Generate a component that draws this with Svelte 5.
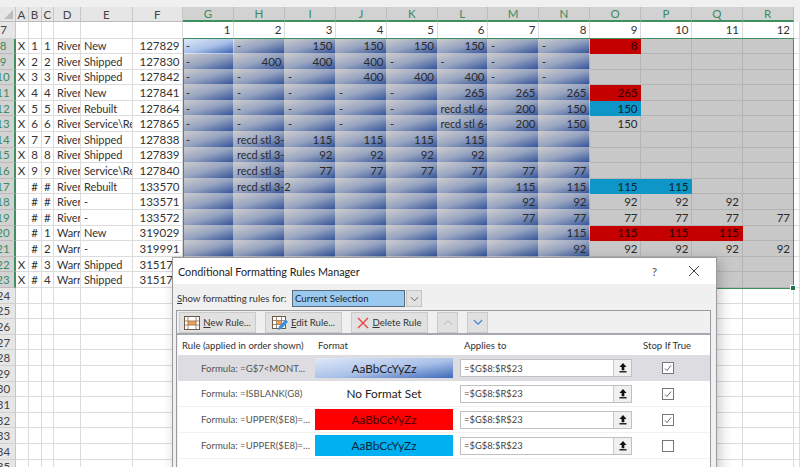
<script>
  const colWidths = [15.5, 13, 13, 12.5, 27, 51.5, 50.5, 51, 51, 51, 51, 50.5, 50.5, 51, 51, 51, 51, 50.5, 51, 6];
  const letters = 'ABCDEFGHIJKLMNOPQR'.split('');
  const gridCols = colWidths.map((w) => w + 'px').join(' ');

  const left = [
    ['X', '1', '1', 'River', 'New', '127829'],
    ['X', '2', '2', 'River', 'Shipped', '127830'],
    ['X', '3', '3', 'River', 'Shipped', '127842'],
    ['X', '4', '4', 'River', 'New', '127841'],
    ['X', '5', '5', 'River', 'Rebuilt', '127864'],
    ['X', '6', '6', 'River', 'Service\\Re', '127865'],
    ['X', '7', '7', 'River', 'Shipped', '127838'],
    ['X', '8', '8', 'River', 'Shipped', '127839'],
    ['X', '9', '9', 'River', 'Service\\Re', '127840'],
    ['', '#', '#', 'River', 'Rebuilt', '133570'],
    ['', '#', '#', 'River', '-', '133571'],
    ['', '#', '#', 'River', '-', '133572'],
    ['', '#', '1', 'Warr', 'New', '319029'],
    ['', '#', '2', 'Warr', '-', '319991'],
    ['X', '#', '3', 'Warr', 'Shipped', '315170'],
    ['X', '#', '4', 'Warr', 'Shipped', '315171']
  ];

  const S3 = 'recd stl 3-';
  const S6 = 'recd stl 6-';
  const months = [
    ['-', '-', '150', '150', '150', '150', '-', '-', '8', '', '', ''],
    ['-', '400', '400', '400', '-', '-', '-', '-', '', '', '', ''],
    ['-', '-', '-', '400', '400', '400', '-', '-', '', '', '', ''],
    ['-', '-', '-', '-', '-', '265', '265', '265', '265', '', '', ''],
    ['-', '-', '-', '-', '-', S6, '200', '150', '150', '', '', ''],
    ['-', '-', '-', '-', '-', S6, '200', '150', '150', '', '', ''],
    ['-', S3, '115', '115', '115', '115', '', '', '', '', '', ''],
    ['', S3, '92', '92', '92', '92', '', '', '', '', '', ''],
    ['', S3, '77', '77', '77', '77', '77', '77', '', '', '', ''],
    ['', 'recd stl 3-2', '', '', '', '', '115', '115', '115', '115', '', ''],
    ['', '', '', '', '', '', '92', '92', '92', '92', '92', ''],
    ['', '', '', '', '', '', '77', '77', '77', '77', '77', '77'],
    ['', '', '', '', '', '', '', '115', '115', '115', '115', ''],
    ['', '', '', '', '', '', '', '92', '92', '92', '92', '92'],
    ['', '', '', '', '', '', '', '', '', '', '', ''],
    ['', '', '', '', '', '', '', '', '', '', '', '']
  ];

  // rows counted from 8, columns from G
  const red = ['0:8', '3:8', '12:8', '12:9', '12:10'];
  const blue = ['4:8', '9:8', '9:9'];

  function fill(r, c) {
    const key = r + ':' + c;
    if (red.includes(key)) return 'red';
    if (blue.includes(key)) return 'blue';
    if (c > 7) return 'grey';
    return r === 0 && c === 0 ? 'grad first' : 'grad';
  }

  const blankRows = Array.from({ length: 12 }, (_, i) => 24 + i);
  const rules = [
    { text: 'Formula: =G$7<MONT...', fmt: 'grad', label: 'AaBbCcYyZz', checked: true, selected: true },
    { text: 'Formula: =ISBLANK(G8)', fmt: 'none', label: 'No Format Set', checked: true },
    { text: 'Formula: =UPPER($E8)=...', fmt: 'red', label: 'AaBbCcYyZz', checked: true },
    { text: 'Formula: =UPPER($E8)=...', fmt: 'blue', label: 'AaBbCcYyZz', checked: false }
  ];
</script>

<div class="page">
  <div class="sheet" style="grid-template-columns: {gridCols}">
    <div class="head corner"><span></span></div>
    {#each letters as l, i}
      <div class="head" class:on={i > 5}>{l}</div>
    {/each}
    <div class="head tail"></div>

    <div class="rh">7</div>
    {#each letters as l, i}
      <div class="c num">{i > 5 ? i - 5 : ''}</div>
    {/each}
    <div class="c"></div>

    {#each left as row, r}
      <div class="rh on">{r + 8}</div>
      {#each row as v, i}
        <div class="c" class:mid={i < 3} class:txt={i === 3 || i === 4} class:num={i === 5}>{v}</div>
      {/each}
      {#each months[r] as v, c}
        <div
          class="c m {fill(r, c)}"
          class:num={v !== '-' && !v.startsWith('recd')}
          class:txt={v === '-' || v.startsWith('recd')}
          class:spill={r === 9 && c === 1}
        >{v}</div>
      {/each}
      <div class="c"></div>
    {/each}

    {#each blankRows as n}
      <div class="rh">{n}</div>
      {#each colWidths.slice(1) as _}
        <div class="c"></div>
      {/each}
    {/each}

    <div class="selection"><i></i></div>
  </div>

  <div class="dialog">
    <div class="title">
      <span>Conditional Formatting Rules Manager</span>
      <span class="help">?</span>
      <svg class="close" viewBox="0 0 12 12" width="12" height="12">
        <path d="M1 1l10 10M11 1L1 11" fill="none" stroke="#444" stroke-width="1" />
      </svg>
    </div>
    <div class="body">
      <div class="scope">
        <span class="scope-label"><u>S</u>how formatting rules for:</span>
        <div class="select">Current Selection</div>
        <div class="arrow">
          <svg viewBox="0 0 10 6" width="9" height="6"><path d="M1 1l4 4 4-4" fill="none" stroke="#555" stroke-width="1" /></svg>
        </div>
      </div>
      <div class="panel">
        <div class="toolbar">
          <button class="btn new">
            <svg viewBox="0 0 16 14" width="16" height="14">
              <rect x="0.5" y="0.5" width="15" height="13" fill="#fff" stroke="#6b5a4a" />
              <rect x="4" y="5" width="8" height="4" fill="#f0a050" />
              <path d="M0.5 5h15M0.5 9h15M4 .5v13M12 .5v13" stroke="#8a6a50" stroke-width="0.8" fill="none" />
            </svg>
            <span><u>N</u>ew Rule...</span>
          </button>
          <button class="btn edit">
            <svg viewBox="0 0 16 16" width="16" height="16">
              <rect x="0.5" y="1.5" width="13" height="12" fill="#fff" stroke="#6b5a4a" />
              <path d="M0.5 5.5h13M0.5 9.5h13M4.5 1.5v12M9.5 1.5v12" stroke="#8a6a50" stroke-width="0.8" fill="none" />
              <rect x="5" y="6" width="4" height="3" fill="#f0a050" />
              <path d="M6 15l1-3.5 6.5-7 2.5 2.2-6.5 7z" fill="#3b8fdc" />
            </svg>
            <span><u>E</u>dit Rule...</span>
          </button>
          <button class="btn del">
            <svg viewBox="0 0 12 12" width="12" height="12">
              <path d="M1 1l10 10M11 1L1 11" fill="none" stroke="#e8413c" stroke-width="1.3" />
            </svg>
            <span><u>D</u>elete Rule</span>
          </button>
          <button class="btn move" aria-label="Move up">
            <svg viewBox="0 0 12 8" width="10" height="7"><path d="M1 7l5-5 5 5" fill="none" stroke="#b5b5b5" stroke-width="1.2" /></svg>
          </button>
          <button class="btn move" aria-label="Move down">
            <svg viewBox="0 0 12 8" width="10" height="7"><path d="M1 1l5 5 5-5" fill="none" stroke="#3a86d0" stroke-width="1.3" /></svg>
          </button>
        </div>
        <div class="list">
          <div class="rule cols">
            <span class="hd">Rule (applied in order shown)</span>
            <span class="hd fmt-hd">Format</span>
            <span class="hd app-hd">Applies to</span>
            <span class="hd stop-hd">Stop If True</span>
          </div>
          {#each rules as rule}
            <div class="rule item" class:selected={rule.selected}>
              <span class="formula">{rule.text}</span>
              <span class="swatch {rule.fmt}">{rule.label}</span>
              <div class="applies">
                <span>=$G$8:$R$23</span>
                <div class="pick">
                  <svg viewBox="0 0 9 11" width="8" height="10">
                    <path d="M4.5 0L8.5 4.5H6V8H3V4.5H.5z" fill="#111" />
                    <rect x="0.5" y="9" width="8" height="1.5" fill="#111" />
                  </svg>
                </div>
              </div>
              <div class="check-cell">
                <div class="check">
                  {#if rule.checked}
                    <svg viewBox="0 0 10 10" width="10" height="10"><path d="M2 5.5l2 2 4-5" fill="none" stroke="#666" stroke-width="1" /></svg>
                  {/if}
                </div>
              </div>
            </div>
          {/each}
        </div>
      </div>
    </div>
  </div>
</div>

<style>
  :global(body) {
    margin: 0;
    background: #fff;
  }

  .page {
    position: relative;
    width: 800px;
    height: 467px;
    overflow: hidden;
  }

  /* sheet */
  .sheet {
    position: relative;
    display: grid;
    grid-template-rows: 15px 16.5px;
    grid-auto-rows: 15.6px;
    padding-top: 7px;
    background: #f0f0f0;
    font-family: Lato, "Liberation Sans", sans-serif;
    font-size: 11.5px;
    color: #333;
  }

  .head {
    display: flex;
    align-items: center;
    justify-content: center;
    background: #e6e6e6;
    border-right: 1px solid #c6c6c6;
    border-bottom: 1px solid #bcbcbc;
    color: #444;
    box-sizing: border-box;
  }

  .head.on {
    background: #d2d2d2;
    color: #3b8a60;
    border-bottom: 2px solid #3f8f63;
    border-right-color: #bbb;
  }

  .head.tail {
    background: #f0f0f0;
    border: none;
  }

  .corner {
    position: relative;
    overflow: hidden;
  }

  .corner span {
    position: absolute;
    right: 2px;
    bottom: 2px;
    border-left: 9px solid transparent;
    border-bottom: 9px solid #bdbdbd;
  }

  .rh {
    display: flex;
    align-items: center;
    justify-content: center;
    padding-right: 7.5px;
    overflow: hidden;
    box-sizing: border-box;
    background: #e6e6e6;
    border-right: 1px solid #c6c6c6;
    border-bottom: 1px solid #d0d0d0;
    color: #444;
  }

  .rh.on {
    background: #d2d2d2;
    color: #3b8a60;
    border-right: 2px solid #3f8f63;
    border-bottom-color: #bbb;
  }

  .c {
    display: flex;
    align-items: center;
    box-sizing: border-box;
    background: #fff;
    border-right: 1px solid #dcdcdc;
    border-bottom: 1px solid #dcdcdc;
    white-space: nowrap;
    overflow: hidden;
    min-width: 0;
  }

  .mid {
    justify-content: center;
  }

  .txt {
    padding-left: 3px;
    font-size: 11px;
    letter-spacing: -0.1px;
  }

  .num {
    justify-content: flex-end;
    padding-right: 2.5px;
  }

  .m {
    border-color: #b4b4b4;
    color: #2a2a2a;
  }

  .grey {
    background: #c8c8c8;
  }

  .grad {
    background: linear-gradient(to bottom right, #cbcbce 0%, #96a3c0 50%, #34559b 100%);
    border-color: transparent;
  }

  .grad.first {
    background: linear-gradient(to bottom right, #dfe9f8 0%, #a9c0e8 55%, #3d66b5 100%);
  }

  .red {
    background: #c40000;
    border-color: #c40000;
    color: #2a0000;
  }

  .blue {
    background: #0f96c8;
    border-color: #0f96c8;
    color: #06222e;
  }

  .spill {
    overflow: visible;
    z-index: 1;
  }

  .selection {
    position: absolute;
    left: 182.5px;
    top: 38px;
    width: 611px;
    height: 251px;
    box-sizing: border-box;
    border: 1.5px solid #3f8f63;
    pointer-events: none;
  }

  .selection i {
    position: absolute;
    right: -3px;
    bottom: -3px;
    width: 4px;
    height: 4px;
    background: #217346;
    border: 1px solid #fff;
  }

  /* dialog */
  .dialog {
    position: absolute;
    left: 172px;
    top: 257px;
    width: 545px;
    height: 220px;
    box-sizing: border-box;
    background: #f0f0f0;
    border: 1px solid #9a9a9a;
    box-shadow: 3px 3px 12px rgba(0, 0, 0, 0.22);
    font-family: Lato, "Liberation Sans", sans-serif;
    font-size: 9.6px;
    color: #333;
  }

  .title {
    display: flex;
    align-items: center;
    height: 26px;
    padding: 0 16px 0 5px;
    background: #fff;
    font-size: 10.8px;
    color: #222;
  }

  .title > span:first-child {
    flex: 1;
  }

  .help {
    margin-right: 31px;
    font-size: 12px;
    color: #555;
  }

  .body {
    padding: 6px 4px 0 3px;
  }

  .scope {
    display: flex;
    align-items: center;
    height: 17px;
    padding-left: 1px;
  }

  .scope-label {
    width: 115px;
    flex: none;
    white-space: nowrap;
  }

  .select {
    width: 113px;
    height: 17px;
    box-sizing: border-box;
    padding-left: 2px;
    line-height: 15px;
    background: #99c9ef;
    border: 1px solid #5a6a78;
    color: #223;
  }

  .arrow {
    display: flex;
    align-items: center;
    justify-content: center;
    width: 16px;
    height: 17px;
    margin-left: 1px;
    background: #e1e1e1;
    border: 1px solid #c4c4c4;
    box-sizing: border-box;
  }

  .panel {
    margin-top: 3px;
    border: 1px solid #9a9aa2;
    border-bottom: none;
    height: 200px;
    margin-right: 1px;
  }

  .toolbar {
    display: flex;
    gap: 9px;
    height: 24px;
    padding: 1px 2px;
    box-sizing: border-box;
    border-bottom: 2px solid #a8a8b0;
  }

  .btn {
    display: flex;
    align-items: center;
    justify-content: center;
    gap: 3px;
    height: 21px;
    padding: 0;
    background: #e1e1e1;
    border: 1px solid #cacaca;
    font: inherit;
    color: #333;
  }

  .new,
  .edit,
  .del {
    width: 77px;
  }

  .move {
    width: 21px;
  }

  .list {
    background: #fff;
    height: 176px;
    margin-left: 1px;
  }

  .rule {
    display: grid;
    grid-template-columns: 137px 138px 187px 55px;
    align-items: center;
  }

  .cols {
    height: 20px;
  }

  .hd {
    padding-left: 4px;
    white-space: nowrap;
  }

  .fmt-hd {
    padding-left: 3px;
  }

  .app-hd {
    padding-left: 11px;
  }

  .stop-hd {
    padding-left: 3px;
  }

  .item {
    height: 26px;
    border-bottom: 1px solid #f2f2ea;
    box-sizing: border-box;
  }

  .item.selected {
    background: #dcdce1;
    border-bottom: none;
  }

  .formula {
    padding-left: 23px;
    color: #555;
    white-space: nowrap;
  }

  .swatch {
    display: flex;
    align-items: center;
    justify-content: center;
    height: 20.5px;
    font-size: 11.8px;
    color: #222;
  }

  .swatch.grad {
    background: linear-gradient(to bottom right, #dfe9f8 0%, #a9c0e8 55%, #3f69b8 100%);
  }

  .swatch.red {
    background: #ff0000;
    border: none;
    color: #4a0000;
  }

  .swatch.blue {
    background: #00b0f0;
    border: none;
    color: #06283a;
  }

  .applies {
    display: flex;
    align-items: center;
    justify-content: space-between;
    width: 172px;
    height: 18px;
    margin-left: 7px;
    padding-left: 3px;
    box-sizing: border-box;
    background: #fff;
    border: 1px solid #c0c0c0;
    color: #444;
    font-size: 9.4px;
  }

  .pick {
    display: flex;
    align-items: center;
    justify-content: center;
    width: 17px;
    height: 16px;
    background: #f0f0f0;
    border-left: 1px solid #c8c8c8;
  }

  .check-cell {
    display: flex;
    justify-content: center;
  }

  .check {
    display: flex;
    align-items: center;
    justify-content: center;
    width: 12px;
    height: 12px;
    box-sizing: border-box;
    background: #fff;
    border: 1px solid #777;
  }
</style>
